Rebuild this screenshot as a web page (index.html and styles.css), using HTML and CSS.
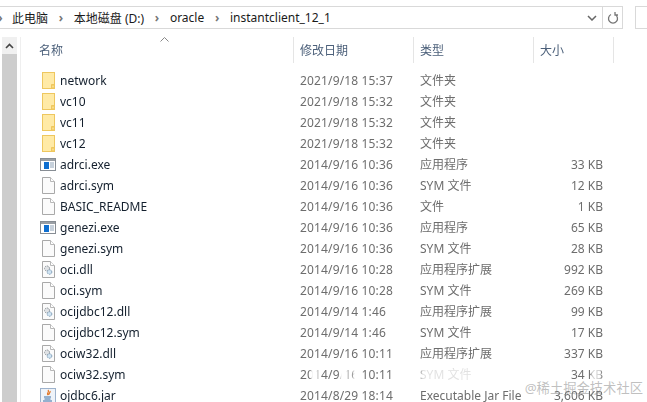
FILE: index.html
```html
<!DOCTYPE html>
<html lang="zh-CN">
<head>
    <meta charset="UTF-8">
    <title>instantclient_12_1</title>
    <link rel="stylesheet" href="styles.css">
</head>
<body>
    <svg class="sprites" width="0" height="0">
        <symbol id="folder" viewBox="0 0 13 17">
            <rect x=".5" y=".5" width="12" height="16" fill="#ffeaa6" stroke="#eec75f"/>
            <path d="M9.500 16.500v-4h3v4z" fill="#f3c64f" stroke="#eec75f"/>
            <path d="M10.500 15.500v-2h1v2z" fill="#fff3c4"/>
        </symbol>
        <symbol id="page" viewBox="0 0 13 17">
            <path d="M.5 .5h8l4 4v12h-12z" fill="#fbfbfb" stroke="#a9a9a9"/>
            <path d="M8.500 .5v4h4" fill="#fff" stroke="#b8b8b8"/>
        </symbol>
        <symbol id="exe" viewBox="0 0 16 14">
            <rect x=".5" y=".5" width="15" height="12" fill="#fff" stroke="#878d94"/>
            <rect x="1" y="1" width="14" height="2" fill="#9a9fa5"/>
            <rect x="4" y="4" width="5" height="7" fill="#0f6fd0"/>
            <path d="M10 5h4M10 7h4M10 9h4" stroke="#8fa3b8"/>
        </symbol>
        <symbol id="dll" viewBox="0 0 13 17">
            <path d="M.5 .5h8l4 4v12h-12z" fill="#fbfbfb" stroke="#a9a9a9"/>
            <path d="M8.500 .5v4h4" fill="#fff" stroke="#b8b8b8"/>
            <circle cx="5" cy="7.500" r="2.500" fill="#dfe2e5" stroke="#8d9499" stroke-dasharray="1.500 .8"/>
            <circle cx="7.500" cy="11" r="2.300" fill="#cfe3f2" stroke="#7e9cb5" stroke-dasharray="1.500 .8"/>
        </symbol>
        <symbol id="jar" viewBox="0 0 16 16">
            <rect x=".5" y=".5" width="15" height="15" fill="#eef3f9" stroke="#9db2cc"/>
            <path d="M8 2c2 2-2 3 0 5M10 3c1 2-2 2-1 4" fill="none" stroke="#e2711d" stroke-width="1.200"/>
            <path d="M4 9h7M4.500 11h6M3 13h9" stroke="#3a6ea5"/>
        </symbol>
    </svg>

    <div class="toolbar">
        <div class="address">
            <div class="crumbs">
                <span class="crumb-arrow">›</span><span>此电脑</span>
                <span class="crumb-arrow">›</span><span>本地磁盘 (D:)</span>
                <span class="crumb-arrow">›</span><span>oracle</span>
                <span class="crumb-arrow">›</span><span>instantclient_12_1</span>
            </div>
            <svg class="drop" width="10" height="6" viewBox="0 0 10 6"><path d="M1 1l4 4 4-4" fill="none" stroke="#666" stroke-width="1.500"/></svg>
            <div class="refresh">
                <svg width="12" height="14" viewBox="0 0 12 14"><path d="M4 3.500a4.500 4.500 0 1 0 4 0M8 1v3h3" fill="none" stroke="#777" stroke-width="1.300"/></svg>
            </div>
        </div>
        <div class="search"></div>
    </div>

    <div class="main">
        <div class="scrollbar">
            <div class="scroll-up">
                <svg width="9" height="6" viewBox="0 0 9 6"><path d="M1 5l3.500-3.500L8 5" fill="none" stroke="#444" stroke-width="1.600"/></svg>
            </div>
            <div class="scroll-thumb"></div>
        </div>

        <div class="list">
            <div class="head">
                <div class="col-name">名称
                    <svg class="sort" width="9" height="5" viewBox="0 0 9 5"><path d="M.5 4.500l4-4 4 4" fill="none" stroke="#888"/></svg>
                </div>
                <div class="col-date">修改日期</div>
                <div class="col-type">类型</div>
                <div class="col-size">大小</div>
            </div>

            <div class="row"><span class="name"><span class="ico"><svg width="13" height="17"><use href="#folder"/></svg></span>network</span><span class="date">2021/9/18 15:37</span><span class="type">文件夹</span><span class="size"></span></div>
            <div class="row"><span class="name"><span class="ico"><svg width="13" height="17"><use href="#folder"/></svg></span>vc10</span><span class="date">2021/9/18 15:32</span><span class="type">文件夹</span><span class="size"></span></div>
            <div class="row"><span class="name"><span class="ico"><svg width="13" height="17"><use href="#folder"/></svg></span>vc11</span><span class="date">2021/9/18 15:32</span><span class="type">文件夹</span><span class="size"></span></div>
            <div class="row"><span class="name"><span class="ico"><svg width="13" height="17"><use href="#folder"/></svg></span>vc12</span><span class="date">2021/9/18 15:32</span><span class="type">文件夹</span><span class="size"></span></div>
            <div class="row"><span class="name"><span class="ico"><svg width="16" height="14"><use href="#exe"/></svg></span>adrci.exe</span><span class="date">2014/9/16 10:36</span><span class="type">应用程序</span><span class="size">33 KB</span></div>
            <div class="row"><span class="name"><span class="ico"><svg width="13" height="17"><use href="#page"/></svg></span>adrci.sym</span><span class="date">2014/9/16 10:36</span><span class="type">SYM 文件</span><span class="size">12 KB</span></div>
            <div class="row"><span class="name"><span class="ico"><svg width="13" height="17"><use href="#page"/></svg></span>BASIC_README</span><span class="date">2014/9/16 10:36</span><span class="type">文件</span><span class="size">1 KB</span></div>
            <div class="row"><span class="name"><span class="ico"><svg width="16" height="14"><use href="#exe"/></svg></span>genezi.exe</span><span class="date">2014/9/16 10:36</span><span class="type">应用程序</span><span class="size">65 KB</span></div>
            <div class="row"><span class="name"><span class="ico"><svg width="13" height="17"><use href="#page"/></svg></span>genezi.sym</span><span class="date">2014/9/16 10:36</span><span class="type">SYM 文件</span><span class="size">28 KB</span></div>
            <div class="row"><span class="name"><span class="ico"><svg width="13" height="17"><use href="#dll"/></svg></span>oci.dll</span><span class="date">2014/9/16 10:28</span><span class="type">应用程序扩展</span><span class="size">992 KB</span></div>
            <div class="row"><span class="name"><span class="ico"><svg width="13" height="17"><use href="#page"/></svg></span>oci.sym</span><span class="date">2014/9/16 10:28</span><span class="type">SYM 文件</span><span class="size">269 KB</span></div>
            <div class="row"><span class="name"><span class="ico"><svg width="13" height="17"><use href="#dll"/></svg></span>ocijdbc12.dll</span><span class="date">2014/9/14 1:46</span><span class="type">应用程序扩展</span><span class="size">99 KB</span></div>
            <div class="row"><span class="name"><span class="ico"><svg width="13" height="17"><use href="#page"/></svg></span>ocijdbc12.sym</span><span class="date">2014/9/14 1:46</span><span class="type">SYM 文件</span><span class="size">17 KB</span></div>
            <div class="row"><span class="name"><span class="ico"><svg width="13" height="17"><use href="#dll"/></svg></span>ociw32.dll</span><span class="date">2014/9/16 10:11</span><span class="type">应用程序扩展</span><span class="size">337 KB</span></div>
            <div class="row"><span class="name"><span class="ico"><svg width="13" height="17"><use href="#page"/></svg></span>ociw32.sym</span><span class="date">2014/9/16 10:11</span><span class="type">SYM 文件</span><span class="size">34 KB</span>
                <i class="smudge smudge-a"></i><i class="smudge smudge-b"></i><i class="smudge smudge-c"></i><i class="smudge smudge-d"></i><i class="smudge smudge-e"></i>
            </div>
            <div class="row"><span class="name"><span class="ico"><svg width="16" height="16"><use href="#jar"/></svg></span>ojdbc6.jar</span><span class="date">2014/8/29 18:14</span><span class="type">Executable Jar File</span><span class="size">3,606 KB</span></div>
        </div>
    </div>

    <div class="watermark">@稀土掘金技术社区</div>
</body>
</html>
```

FILE: styles.css
```css
* {
    margin: 0;
    padding: 0;
    box-sizing: border-box;
}

html, body {
    height: 402px;
    overflow: hidden;
}

body {
    background-color: #fff;
    font-family: "Noto Sans", "Noto Sans CJK SC", sans-serif;
    font-size: 12px;
    color: #1a1a1a;
    position: relative;
}

.sprites {
    position: absolute;
}

.toolbar {
    display: flex;
    height: 37px;
    padding-top: 6px;
}

.address {
    width: 625px;
    height: 23px;
    border: 1px solid #d9d9d9;
    border-left: none;
    display: flex;
    align-items: center;
}

.crumbs {
    flex: 1;
    display: flex;
    align-items: center;
    white-space: nowrap;
}

.crumb-arrow {
    color: #777;
    font-weight: bold;
    width: 11px;
    margin: 0 7.400px;
    text-align: center;
}

.crumbs .crumb-arrow:first-child {
    margin-left: -5px;
    margin-right: 6px;
}

.drop {
    margin-right: 5px;
}

.refresh {
    width: 20px;
    height: 100%;
    border-left: 1px solid #d9d9d9;
    display: flex;
    align-items: center;
    justify-content: center;
}

.search {
    width: 12px;
    height: 23px;
    margin-left: 12px;
    border: 1px solid #d9d9d9;
    border-right: none;
}

.main {
    display: flex;
    height: 365px;
}

.scrollbar {
    width: 21px;
    padding-left: 2px;
    border-right: 1px solid #efefef;
    margin-right: 8px;
    display: flex;
    flex-direction: column;
}

.scroll-up {
    width: 15px;
    height: 17px;
    background-color: #f0f0f0;
    display: flex;
    align-items: center;
    justify-content: center;
}

.scroll-thumb {
    width: 15px;
    flex: 1;
    background-color: #cdcdcd;
}

.list {
    flex: 1;
    filter: blur(0.25px);
}

.head {
    display: flex;
    height: 26px;
    color: #4c607a;
    margin-bottom: 7px;
}

.head > div {
    padding-left: 6px;
    line-height: 28px;
    border-right: 1px solid #e5e5e5;
}

.head > .col-name {
    width: 265px;
    padding-left: 10px;
    position: relative;
}

.col-date,
.col-type {
    width: 120px;
}

.col-size {
    width: 80px;
}

.sort {
    position: absolute;
    left: 131px;
    top: 0;
}

.row {
    display: flex;
    height: 21px;
    line-height: 21px;
    white-space: nowrap;
    position: relative;
}

.name {
    width: 264px;
    color: #14202e;
    display: flex;
    align-items: center;
    padding-left: 11px;
}

.ico {
    width: 16px;
    margin-right: 4px;
    flex: none;
    display: flex;
    align-items: center;
    justify-content: center;
}

.date {
    width: 120px;
    padding-left: 7px;
    color: #6d6d6d;
    letter-spacing: 0.15px;
}

.type {
    width: 110px;
    padding-left: 7px;
    color: #6d6d6d;
}

.size {
    width: 80px;
    text-align: right;
    color: #6d6d6d;
}

/* washed-out patches over the ociw32.sym row */
.smudge {
    position: absolute;
    top: 3px;
    height: 15px;
    background-color: #fff;
    filter: blur(1px);
}

.smudge-a {
    left: 282px;
    width: 7px;
}

.smudge-b {
    left: 311px;
    width: 8px;
}

.smudge-c {
    left: 324px;
    width: 9px;
}

.smudge-d {
    left: 392px;
    width: 52px;
    opacity: 0.8;
}

.smudge-e {
    left: 562px;
    width: 10px;
    opacity: 0.7;
}

.watermark {
    position: absolute;
    right: 4px;
    bottom: 5px;
    font-size: 13.300px;
    color: rgba(130, 130, 130, 0.5);
}
```
